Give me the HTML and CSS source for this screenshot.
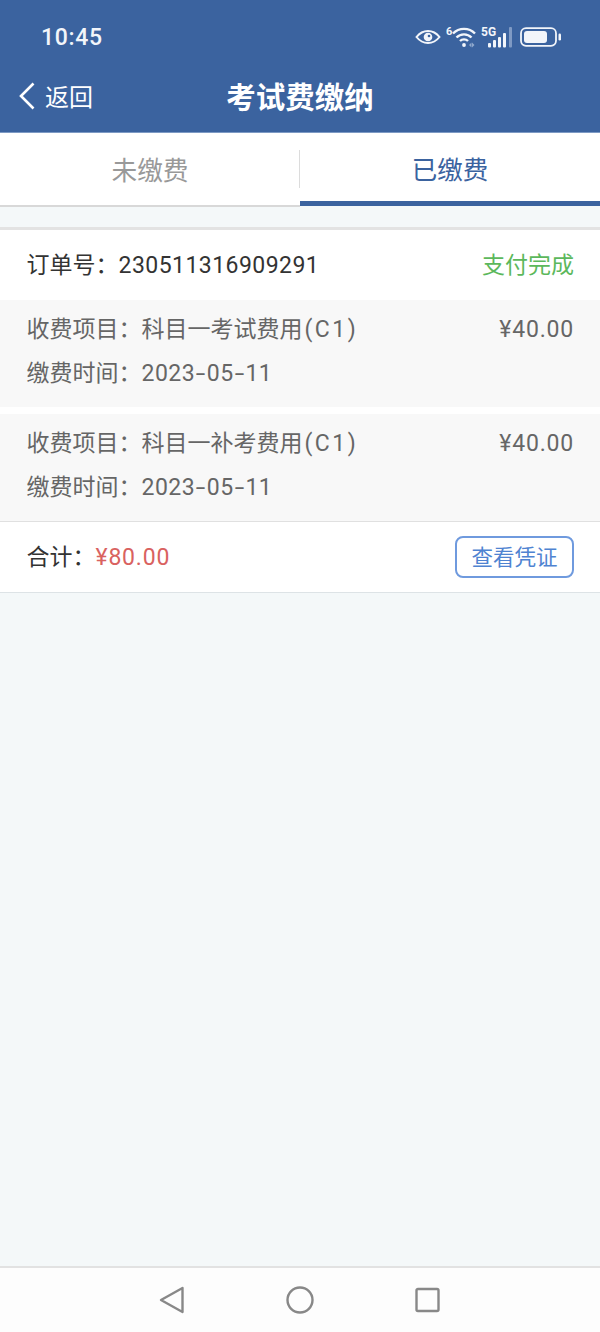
FILE: index.html
```html
<!DOCTYPE html>
<html lang="zh-CN">

<head>
    <meta charset="UTF-8">
    <meta name="viewport" content="width=device-width, initial-scale=1.0">
    <title>考试费缴纳</title>

    <link rel="stylesheet" href="styles.css">
</head>

<body>

    <div class="wrapper">

        <div class="header">
            <div class="statusBar">
                <span class="time">10:45</span>
                <div class="statusIcons">
                    <!-- eye -->
                    <svg class="iconEye" width="26" height="14" viewBox="0 0 26 14">
                        <path d="M1.5 7C5 2.6 8.8 1 13 1s8 1.600 11.500 6C21 11.400 17.200 13 13 13S5 11.400 1.500 7z" fill="none" stroke="#f2f5fa" stroke-width="2"/>
                        <circle cx="13" cy="7" r="4.300" fill="#f2f5fa"/>
                        <circle cx="14" cy="6" r="1.300" fill="#3b639f"/>
                    </svg>
                    <!-- wifi -->
                    <svg class="iconWifi" width="30" height="22" viewBox="0 0 30 22">
                        <text x="0" y="8.500" class="tinyText">6</text>
                        <path d="M7 7.500C13 1.300 23 1.300 29 7.500" fill="none" stroke="#f2f5fa" stroke-width="2.400"/>
                        <path d="M10.500 11.500C14.500 7.300 21.500 7.300 25.500 11.500" fill="none" stroke="#f2f5fa" stroke-width="2.400"/>
                        <path d="M14 15C16.200 12.800 19.800 12.800 22 15" fill="none" stroke="#f2f5fa" stroke-width="2.400"/>
                        <circle cx="18" cy="19" r="1.900" fill="#f2f5fa"/>
                        <path d="M23 19l2.500-2.500v5zM26 16.500l2.500 2.500-2.500 2.500z" fill="#8fa8cc"/>
                    </svg>
                    <!-- signal -->
                    <svg class="iconSignal" width="32" height="22" viewBox="0 0 32 22">
                        <text x="0" y="10" class="smallText">5G</text>
                        <rect x="7" y="17" width="3" height="4.500" rx="1" fill="#f2f5fa"/>
                        <rect x="12" y="14" width="3" height="7.500" rx="1" fill="#f2f5fa"/>
                        <rect x="17" y="11" width="3" height="10.500" rx="1" fill="#f2f5fa"/>
                        <rect x="22" y="7" width="3" height="14.500" rx="1" fill="#f2f5fa"/>
                        <rect x="28" y="1" width="3" height="20.500" rx="1" fill="#7f9ac4"/>
                    </svg>
                    <!-- battery -->
                    <svg class="iconBattery" width="42" height="20" viewBox="0 0 42 20">
                        <rect x="1" y="1.200" width="35" height="17.600" rx="5" fill="none" stroke="#f2f5fa" stroke-width="1.800"/>
                        <rect x="4" y="4" width="23" height="12" rx="3" fill="#f2f5fa"/>
                        <rect x="38.500" y="6.500" width="2.500" height="7" rx="1.200" fill="#f2f5fa"/>
                    </svg>
                </div>
            </div>

            <div class="navBar">
                <div class="back">
                    <svg width="16" height="28" viewBox="0 0 16 28">
                        <path d="M14.500 1.500L2 14l12.500 12.500" fill="none" stroke="#fff" stroke-width="2.600"/>
                    </svg>
                    <span>返回</span>
                </div>
                <p class="title">考试费缴纳</p>
            </div>
        </div>

        <div class="tabs">
            <div class="tab">未缴费</div>
            <div class="tab active">已缴费</div>
        </div>

        <!-- order -->
        <div class="order">
            <div class="orderHead">
                <p>订单号：<span class="num">230511316909291</span></p>
                <p class="done">支付完成</p>
            </div>

            <div class="item">
                <div class="itemLine">
                    <p>收费项目：科目一考试费用<span class="code">(C1)</span></p>
                    <p class="num price">¥40.00</p>
                </div>
                <div class="itemLine">
                    <p>缴费时间：<span class="num">2023<span class="dash">-</span>05<span class="dash">-</span>11</span></p>
                </div>
            </div>

            <div class="item">
                <div class="itemLine">
                    <p>收费项目：科目一补考费用<span class="code">(C1)</span></p>
                    <p class="num price">¥40.00</p>
                </div>
                <div class="itemLine">
                    <p>缴费时间：<span class="num">2023<span class="dash">-</span>05<span class="dash">-</span>11</span></p>
                </div>
            </div>

            <div class="orderFoot">
                <p>合计：<span class="num total">¥80.00</span></p>
                <button class="voucher">查看凭证</button>
            </div>
        </div>

        <div class="spacer"></div>

        <div class="sysNav">
            <svg width="26" height="28" viewBox="0 0 26 28">
                <path d="M23.500 2L2 14l21.500 12z" fill="none" stroke="#888" stroke-width="2.400" stroke-linejoin="round"/>
            </svg>
            <svg width="28" height="28" viewBox="0 0 28 28">
                <circle cx="14" cy="14" r="12.500" fill="none" stroke="#888" stroke-width="2.400"/>
            </svg>
            <svg width="26" height="26" viewBox="0 0 26 26">
                <rect x="1.500" y="2" width="22" height="22" rx="1.500" fill="none" stroke="#888" stroke-width="2.400"/>
            </svg>
        </div>

    </div>

</body>
</html>
```

FILE: styles.css
```css
* {
    box-sizing: border-box;
}

p {
    margin: 0;
    padding: 0;
}

body {
    margin: 0;
    background-color: #f4f8f9;
    font-family: "Noto Sans CJK SC", "Noto Sans", sans-serif;
}

.wrapper {
    width: 600px;
    height: 1332px;
    display: flex;
    flex-direction: column;
}

.header {
    height: 133px;
    background-color: #3b639f;
    border-bottom: 1px solid #7d9ac4;
    color: white;
}

.statusBar {
    height: 70px;
    padding: 4px 38px 0 41px;
    display: flex;
    align-items: center;
    justify-content: space-between;
}

.time {
    font-family: Roboto, sans-serif;
    font-size: 23px;
    font-weight: 500;
    letter-spacing: 0.700px;
    color: #f2f5fa;
}

.statusIcons {
    display: flex;
    align-items: center;
}

.iconWifi {
    margin-left: 5px;
}

.iconSignal {
    margin-left: 5px;
}

.iconBattery {
    margin-left: 7px;
}

.tinyText {
    font-family: Roboto, sans-serif;
    font-size: 11px;
    font-weight: 700;
    fill: #f2f5fa;
}

.smallText {
    font-family: Roboto, sans-serif;
    font-size: 12px;
    font-weight: 700;
    fill: #f2f5fa;
}

.navBar {
    height: 54px;
    padding: 0 0 3px 19px;
    display: flex;
    align-items: center;
    position: relative;
}

.back {
    display: flex;
    align-items: center;
    font-size: 24px;
    gap: 10px;
}

.title {
    position: absolute;
    left: 0;
    right: 0;
    margin-top: -2px;
    text-align: center;
    font-size: 29.500px;
    font-weight: 700;
}

.tabs {
    height: 74px;
    display: flex;
}

.tab {
    width: 300px;
    padding-bottom: 1px;
    display: flex;
    align-items: center;
    justify-content: center;
    font-size: 25.700px;
    color: #999;
    background-color: white;
    border-bottom: 2px solid #d8d8d8;
    position: relative;
}

.tab::after {
    content: "";
    position: absolute;
    right: 0;
    top: 17px;
    height: 38px;
    width: 1px;
    background-color: #dcdcdc;
}

.tab.active {
    padding-bottom: 0;
    margin-bottom: 1px;
    font-size: 25.500px;
    color: #3b639f;
    border-bottom: 5px solid #3b639f;
}

.tab.active::after {
    display: none;
}

.order {
    margin-top: 20px;
    border-top: 3px solid #e3e3e3;
    background-color: white;
    border-bottom: 1px solid #dde3e6;
    font-size: 23px;
}

.num {
    font-family: Roboto, sans-serif;
    letter-spacing: 0.450px;
}

.dash {
    display: inline-block;
    padding: 0 2.500px;
    transform: scaleX(1.500);
}

.price {
    margin-top: 4px;
    letter-spacing: 0.800px;
}

.code {
    padding-left: 2px;
    font-family: Roboto, sans-serif;
    letter-spacing: 2.500px;
}

.orderHead {
    height: 70px;
    padding: 0 26px 4px 26.500px;
    display: flex;
    align-items: center;
    justify-content: space-between;
    color: #333;
}

.done {
    color: #5cb85c;
}

.item {
    height: 107px;
    padding: 7px 26px 0 26.500px;
    background-color: #f8f8f8;
    color: #666;
}

.item + .item {
    margin-top: 7px;
    border-bottom: 1px solid #e0e0e0;
    height: 108px;
}

.itemLine {
    height: 44px;
    padding-bottom: 4px;
    display: flex;
    align-items: center;
    justify-content: space-between;
}

.orderFoot {
    height: 70px;
    padding: 0 26px 4px 26.500px;
    display: flex;
    align-items: center;
    justify-content: space-between;
    color: #333;
}

.total {
    letter-spacing: 0.800px;
    color: #d9625f;
}

.voucher {
    width: 119px;
    height: 42px;
    margin-top: 4px;
    padding: 0 0 3px;
    background-color: white;
    border: 2px solid #6f9ade;
    border-radius: 8px;
    color: #4f83d1;
    font-family: inherit;
    font-size: 21.500px;
}

.spacer {
    flex: 1;
}

.sysNav {
    height: 66px;
    padding-left: 159px;
    display: flex;
    align-items: center;
    gap: 101px;
    background-color: #fdfdfd;
    border-top: 2px solid #e2e2e2;
}
```
